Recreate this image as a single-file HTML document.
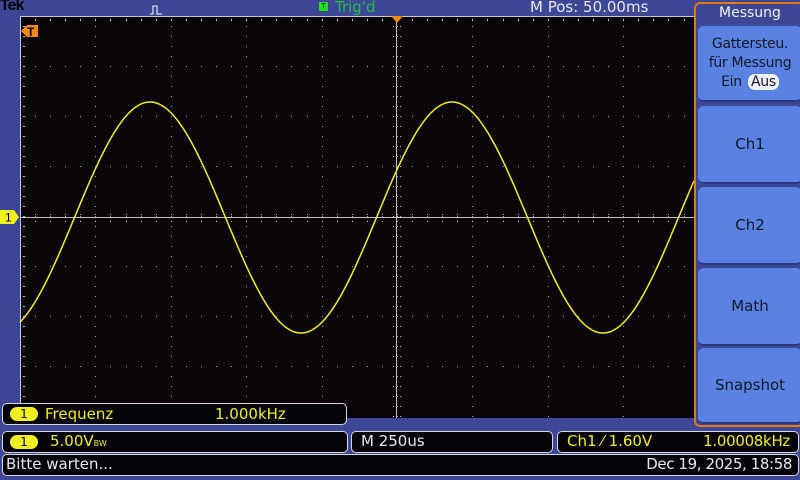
<!DOCTYPE html>
<html><head><meta charset="utf-8"><style>
*{margin:0;padding:0;box-sizing:border-box}
body{width:800px;height:480px;background:#3d4796;position:relative;overflow:hidden;font-family:"DejaVu Sans","Liberation Sans",sans-serif}
.t{position:absolute;white-space:nowrap}
.box{position:absolute;background:#050308;border:1px solid #d8d8e0;border-radius:5px}
.pill{position:absolute;background:#f0f020;border-radius:8px;color:#000;font-size:12px;text-align:center;line-height:14px;height:14px}
.btn{position:absolute;left:698px;width:104px;background:#5a82e2;border-radius:6px;border-bottom:2px solid #2a3a80;color:#101828;font-size:15px;text-align:center;display:flex;align-items:center;justify-content:center;line-height:20px;white-space:nowrap}
</style></head><body>
<div class="t" style="left:0;top:-3px;font:bold 16px 'Liberation Sans',sans-serif;color:#000;letter-spacing:-1px">Tek</div>
<svg class="t" style="left:150px;top:4px" width="20" height="12"><path d="M0 10H3V2H7V10H12" stroke="#fff" fill="none" stroke-width="1"/></svg>
<div class="t" style="left:319px;top:2px;width:9px;height:9px;background:#1ee01e;color:#000;font-size:7px;line-height:9px;text-align:center">T</div>
<div class="t" style="left:335px;top:-2px;color:#22c040;font-size:15px">Trig'd</div>
<div class="t" style="left:530px;top:-2px;color:#e8e8f0;font-size:15px">M Pos: 50.00ms</div>
<svg class="t" style="left:0;top:0" width="800" height="480" id="s">
<rect x="20" y="16" width="676" height="402" fill="#080408"/>
<line x1="20" y1="16.5" x2="696" y2="16.5" stroke="#c8c8d0"/>
<line x1="20.5" y1="16" x2="20.5" y2="418" stroke="#c8c8d0"/>
<g id="g"></g>
<line x1="20" y1="217.5" x2="696" y2="217.5" stroke="#c0c0c0"/>
<line x1="396.5" y1="16" x2="396.5" y2="418" stroke="#c0c0c0"/>
<path id="w" fill="none" stroke="#f4f020" stroke-width="1.5"/>
<path d="M391 16h12l-6 7z" fill="#f08a10"/>
<path d="M21 31l6-6h11v12h-11z" fill="#f08a10"/>
<text x="27" y="36" font-size="12" font-weight="bold" fill="#000" font-family="Liberation Sans">T</text>
<path d="M0 210h14l5 7-5 7h-14z" fill="#f0f020"/>
<text x="5" y="221.5" font-size="12" fill="#000" font-family="Liberation Sans">1</text>
</svg>
<div style="position:absolute;left:694px;top:2px;width:110px;height:425px;border:2px solid #e07818;border-radius:6px;background:#3d4796"></div>
<div class="t" style="left:698px;top:5px;width:104px;text-align:center;color:#f0f0f0;font-size:14px">Messung</div>
<div class="btn" style="top:26px;height:76px;font-size:14px;line-height:19px;letter-spacing:-0.3px"><div>Gattersteu.<br>für Messung<br>Ein <span style="background:#f0f0f8;border-radius:7px;padding:0 3px;margin-left:2px">Aus</span></div></div>
<div class="btn" style="top:106px;height:78px">Ch1</div>
<div class="btn" style="top:187px;height:78px">Ch2</div>
<div class="btn" style="top:268px;height:78px">Math</div>
<div class="btn" style="top:348px;height:76px">Snapshot</div>
<div class="box" style="left:2px;top:403px;width:345px;height:22px"></div>
<div class="pill" style="left:10px;top:407px;width:28px">1</div>
<div class="t" style="left:45px;top:405px;color:#f0f020;font-size:15px">Frequenz</div>
<div class="t" style="left:215px;top:405px;color:#f0f020;font-size:15px">1.000kHz</div>
<div class="box" style="left:2px;top:431px;width:346px;height:22px"></div>
<div class="pill" style="left:10px;top:435px;width:28px">1</div>
<div class="t" style="left:50px;top:432px;color:#f0f020;font-size:15px">5.00V<span style="font-size:8px">BW</span></div>
<div class="box" style="left:351px;top:431px;width:202px;height:22px"></div>
<div class="t" style="left:361px;top:432px;color:#e8e8f0;font-size:15px">M 250us</div>
<div class="box" style="left:557px;top:431px;width:242px;height:22px"></div>
<div class="t" style="left:567px;top:432px;color:#f0f020;font-size:15px">Ch1 ⁄ 1.60V</div>
<div class="t" style="right:10px;top:432px;color:#f0f020;font-size:15px;letter-spacing:-0.3px">1.00008kHz</div>
<div class="box" style="left:2px;top:454px;width:797px;height:22px"></div>
<div class="t" style="left:6px;top:455px;color:#e8e8f0;font-size:15px">Bitte warten...</div>
<div class="t" style="right:8px;top:455px;color:#e8e8f0;font-size:15px;letter-spacing:-0.4px">Dec 19, 2025, 18:58</div>
<script>
var g='',dx=75.4,dy=50;
for(var i=1;i<=9;i++){var x=Math.round(20+i*dx);for(var y=26;y<418;y+=10)g+='<rect x="'+x+'" y="'+y+'" width="1" height="1" fill="#aaa"/>';}
for(var j=1;j<8;j++){var y=16+j*dy;for(var k=1;k<46;k++){var x=Math.round(20+k*dx/5);g+='<rect x="'+x+'" y="'+y+'" width="1" height="1" fill="#aaa"/>';}}
for(var k=1;k<46;k++){var x=Math.round(20+k*dx/5);g+='<rect x="'+x+'" y="214" width="1" height="1" fill="#ccc"/><rect x="'+x+'" y="221" width="1" height="1" fill="#ccc"/><rect x="'+x+'" y="19" width="1" height="2" fill="#ccc"/>';}
for(var y=26;y<418;y+=10){g+='<rect x="393" y="'+y+'" width="1" height="1" fill="#ccc"/><rect x="400" y="'+y+'" width="1" height="1" fill="#ccc"/><rect x="23" y="'+y+'" width="2" height="1" fill="#ccc"/>';}
document.getElementById('g').innerHTML=g;
var d='';for(var x=20;x<=694;x+=1){var y=217.5-115.5*Math.sin(2*Math.PI*(x-376.5)/302);d+=(x==20?'M':'L')+x+' '+y.toFixed(1);}
document.getElementById('w').setAttribute('d',d);
</script>
</body></html>
